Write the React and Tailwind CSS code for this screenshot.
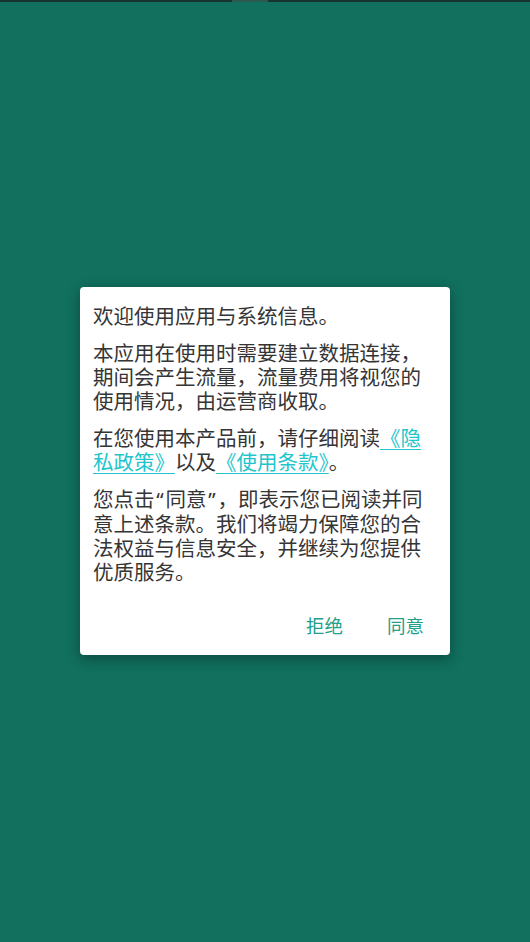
import React from 'react';

const font = { fontFamily: '"Noto Sans CJK SC", "Noto Sans", sans-serif' };

const Link = ({ children }) => (
  <span className="text-[#22c5cc] underline underline-offset-[3px] decoration-1">{children}</span>
);

// narrow western-style quotes like the reference
const Q = ({ children }) => (
  <span className="inline-block w-[11px] text-center" style={{ fontFamily: '"Noto Sans", sans-serif' }}>{children}</span>
);

const App = () => {
  return (
    <div className="relative w-[530px] h-[942px] bg-[#11705e] flex items-center justify-center" style={font}>
      <div className="absolute top-0 left-0 right-0 h-[2px] bg-[#17342e] flex justify-center">
        <div className="w-[36px] h-[2px] bg-[#2a5a50] ml-[-30px]"></div>
      </div>

      <div className="w-[370px] h-[368px] bg-white rounded-[4px] shadow-[0_4px_14px_rgba(0,0,0,0.35)] pt-[16px] px-[13px] flex flex-col">
        <div className="w-[344px] text-[20.5px] leading-[24px] text-[#353535] space-y-[13px]">
          <p>欢迎使用应用与系统信息。</p>
          <p>本应用在使用时需要建立数据连接，期间会产生流量，流量费用将视您的使用情况，由运营商收取。</p>
          <p>
            在您使用本产品前，请仔细阅读<Link>《隐私政策》</Link>以及<Link>《使用条款》</Link>。
          </p>
          <p>
            您点击<Q>“</Q>同意<Q>”</Q>，即表示您已阅读并同意上述条款。我们将竭力保障您的合法权益与信息安全，并继续为您提供优质服务。
          </p>
        </div>

        <div className="mt-auto mb-[9px] flex justify-end gap-[10px] pr-[13px] text-[18.5px] text-[#23a08b]">
          <button className="h-[40px] px-[17px]">拒绝</button>
          <button className="h-[40px] pl-[17px]">同意</button>
        </div>
      </div>
    </div>
  );
};

export default App;
